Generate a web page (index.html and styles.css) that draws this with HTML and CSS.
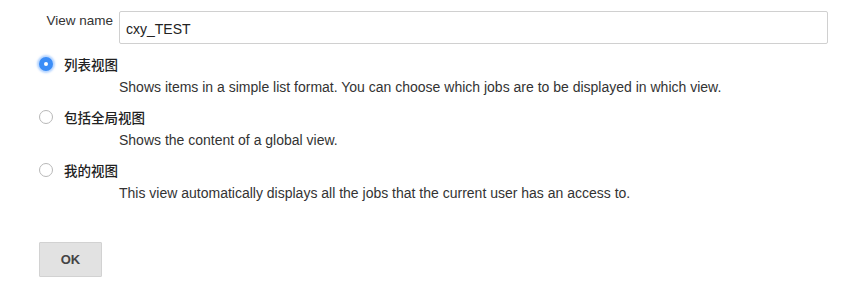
FILE: index.html
```html
<!DOCTYPE html>
<html lang="en">
<head>
    <meta charset="UTF-8">
    <meta name="viewport" content="width=device-width, initial-scale=1.0">
    <title>New View</title>
    <link rel="stylesheet" href="styles.css">
</head>
<body>
    <form class="viewForm">
        <div class="nameRow">
            <label class="nameLabel" for="viewName">View name</label>
            <input type="text" id="viewName" class="nameInput" value="cxy_TEST">
        </div>

        <div class="option">
            <label class="optionHead">
                <span class="radio checked"></span>
                <span class="optionTitle">列表视图</span>
            </label>
            <div class="optionDesc">Shows items in a simple list format. You can choose which jobs are to be displayed in which view.</div>
        </div>
        <div class="option">
            <label class="optionHead">
                <span class="radio"></span>
                <span class="optionTitle">包括全局视图</span>
            </label>
            <div class="optionDesc">Shows the content of a global view.</div>
        </div>
        <div class="option">
            <label class="optionHead">
                <span class="radio"></span>
                <span class="optionTitle">我的视图</span>
            </label>
            <div class="optionDesc">This view automatically displays all the jobs that the current user has an access to.</div>
        </div>

        <button type="submit" class="okButton">OK</button>
    </form>
</body>
</html>
```

FILE: styles.css
```css
body {
    margin: 0;
    font-family: "Liberation Sans", Arial, "Noto Sans CJK SC", sans-serif;
    color: #333;
    background: #fff;
}
.viewForm {
    padding-top: 11px;
}
.nameRow {
    display: flex;
    align-items: flex-start;
}
.nameLabel {
    width: 113px;
    box-sizing: border-box;
    text-align: right;
    padding-top: 1px;
    font-size: 13.5px;
    line-height: 18px;
    color: #333;
}
.nameInput {
    margin-left: 6px;
    width: 709px;
    height: 33px;
    box-sizing: border-box;
    border: 1px solid #d0d0d0;
    border-radius: 2px;
    padding: 2px 6px 0;
    font-family: "Liberation Sans", Arial, sans-serif;
    font-size: 14px;
    color: #222;
    outline: none;
}
.option {
    padding-left: 39px;
    margin-top: 12px;
}
.option + .option {
    margin-top: 14px;
}
.optionHead {
    display: flex;
    align-items: center;
    height: 16px;
}
.radio {
    width: 14px;
    height: 14px;
    box-sizing: border-box;
    border: 1.5px solid #b8b8b8;
    border-radius: 50%;
    background: #fff;
    position: relative;
}
.radio.checked {
    border: none;
    background: #3b8df7;
    box-shadow: 0 0 2px 2px rgba(90, 160, 255, 0.45);
}
.radio.checked::after {
    content: "";
    position: absolute;
    left: 5px;
    top: 5px;
    width: 4px;
    height: 4px;
    border-radius: 50%;
    background: #fff;
}
.optionTitle {
    margin-left: 11px;
    font-family: "Noto Sans CJK SC", sans-serif;
    font-size: 13.5px;
    font-weight: 500;
    color: #222;
}
.optionDesc {
    margin-top: 7px;
    padding-left: 80px;
    font-size: 14px;
    line-height: 16px;
    color: #333;
}
.okButton {
    display: block;
    margin: 41px 0 0 39px;
    width: 63px;
    height: 35px;
    border: 1px solid #d2d2d2;
    border-radius: 1px;
    background: #e2e2e2;
    font-family: "Liberation Sans", Arial, sans-serif;
    font-size: 13px;
    font-weight: bold;
    color: #444;
}
```
